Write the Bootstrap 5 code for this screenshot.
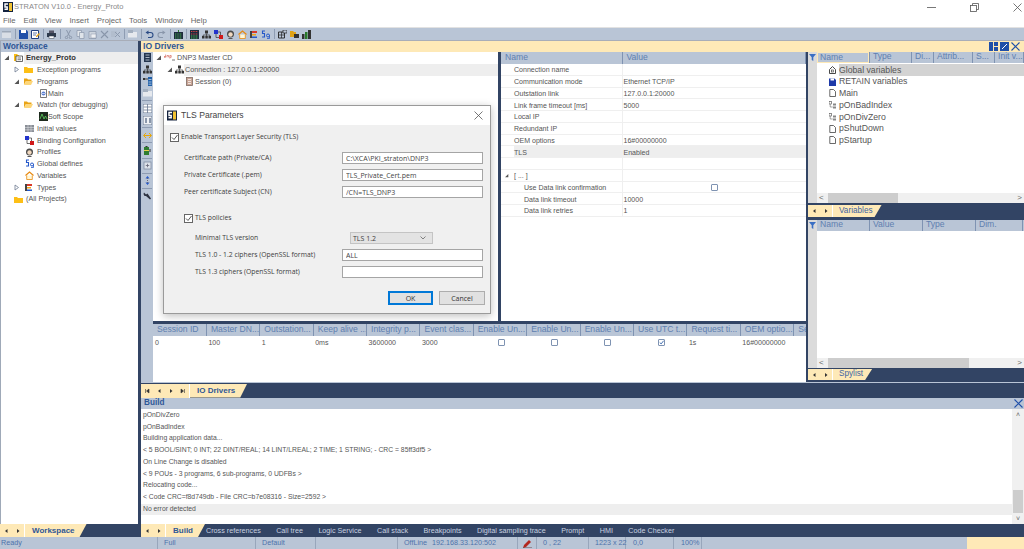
<!DOCTYPE html>
<html lang="en">
<head>
<meta charset="utf-8">
<title>STRATON V10.0 - Energy_Proto</title>
<link rel="stylesheet" href="https://cdn.jsdelivr.net/npm/bootstrap@5.3.0/dist/css/bootstrap.min.css">
<style>
html,body{margin:0;width:1024px;height:549px;overflow:hidden;background:#fff}
body{font:7.2px/1 "Liberation Sans",Arial,sans-serif;color:#555;display:flex;flex-direction:column;opacity:.999}
svg{display:block;flex:none}
.sprites{position:absolute;width:0;height:0}
.ttl{height:14px;color:#8a8a8a;font-size:7.5px;padding-left:3px;gap:1px;flex:none}
.logo{width:10px;height:10px}
.winb{margin-left:auto;gap:34px;padding-right:2px}
.winb svg{width:9px;height:9px}
.mnu{height:13px;flex:none;color:#666;font-size:7.8px;padding-left:3px;gap:7.9px;padding-top:1px}
.tbar{height:14px;flex:none;background:#b9c5d6;border-top:1px solid #e2e2e2;border-bottom:1px solid #a8adb8;padding-left:2px}
.tbar svg{width:9px;height:9px;margin-right:2.8px}
.tsep{width:1px;height:10px;background:#8e9cb2;margin:0 3px 0 1px;flex:none}
.main{flex:1 1 auto;min-height:0;background:#324464}
.leftc{width:138px;flex:none;background:#fff;border-left:1px solid #9fa9b8}
.phead{height:11px;background:#b9c5d6;color:#2f5796;font-weight:700;font-size:8.4px;padding-left:2px;flex:none}
.tr{height:11.78px;flex:none;white-space:nowrap;font-size:7.2px}
.tr svg{width:9px;height:9px}
.tr .arr{width:7px;height:7px}
.l0{padding-left:2px}.l1{padding-left:12px}.l2{padding-left:38px}.l1n{padding-left:24px}.l3{padding-left:13px}
.arrs{gap:4px}
.ico{margin-right:3px}
.ename{background:#eee;font-weight:700;font-size:7.6px;color:#333;padding-left:2px;margin-left:-3px;flex:1;height:100%;display:flex;align-items:center}
.midc{width:883px;margin-left:3px;flex:none;background:#fff}
.iohd{height:11px;background:#fee9b7;border-top:1px solid #a8adb8;margin-top:-1px;flex:none;color:#2f5796;font-weight:700;font-size:8.6px;padding-left:2px;box-sizing:content-box}
.iobtn{margin-left:auto;gap:2px;padding-right:4px}
.iobtn svg{width:9px;height:9px}
.upper{height:329.5px;flex:none;background:#324464}
.strip{width:12px;flex:none;background:#b9c5d6}
.strip svg{width:9px;height:9px;margin:1.4px auto}
.stsep{height:1px;background:#8e9cb2;margin:1.2px 1px;flex:none}
.centerc{width:653px;flex:none;background:#324464;margin-right:2px}
.toprow{height:269px;flex:none}
.iotree{width:345px;flex:none;background:#fff}
.t1{padding-left:2px}.t2{padding-left:13px}.t3{padding-left:32px}
.trg{gap:2px}
.tr .dnp{width:11px}
.m1{margin-right:1px}
.sel2{background:#eee;flex:1;padding-left:1px;margin-left:-2px;height:100%;display:flex;align-items:center}
.props{width:305px;margin-left:3px;flex:none;background:#fff;overflow:hidden}
.gridt{table-layout:fixed;margin:0;--bs-table-bg:transparent;--bs-table-color:#555;color:#555;font-size:7.05px;border-collapse:collapse}
.gridt>:not(caption)>*>*{padding:1px 0 0 2px;height:11.75px;line-height:9px;border-bottom:0;white-space:nowrap;overflow:hidden;font-weight:400;box-shadow:none;vertical-align:middle}
.gridt>thead>tr>th{background:#b9c5d6;color:#5f80b0;font-size:8.6px;border-right:1px solid #7f93b2;height:11.5px;padding:0 0 0 4px}
.props .gridt td{border-bottom:1px solid #efefef}
.props .gridt td:first-child{border-right:1px solid #efefef;padding-left:13px}
.props .gridt .kid td:first-child{padding-left:23px}
.props .gridt .expr td:first-child{padding-left:3px}
.props .gridt .hit td{background:#eee}
.props .gridt .hit td:first-child{background:linear-gradient(90deg,#fff 13px,#eee 13px)}
.props .gridt td:last-child{padding-left:1px}
.expin{gap:5px}
.expin svg{width:5px;height:5px}
.cname{width:121px}
.chk{width:7px;height:7px;border:1px solid #7f93b2;background:#fff;margin:auto;border-radius:1px}
.chk svg{width:5px;height:5px}
.sess{background:#fff;margin-top:3px;flex:1;min-height:0;overflow:hidden}
.sess .gridt{width:680px}
.sess .gridt>*>*>*{width:53.4px}
.sess .gridt>tbody>tr>td{height:13px;padding-top:1px}
.rightc{width:216px;flex:none}
.vpane{flex:none;background:#dbdbdb;overflow:hidden}
.vtop{height:151px}
.vspy{height:148px}
.vbody{background:#fff;padding-top:1px}
.vhead{height:11px;background:#b9c5d6;flex:none}
.filt{width:9px;height:11px;flex:none;background:#dbdbdb}
.filt svg{width:7px;height:7px;margin:2px auto}
.vtb{height:11.75px;white-space:nowrap;font-size:8.7px;padding-left:12px}
.vtb svg{width:7px;height:8px;margin-right:3px}
.vsel{background:#d3d3d3;flex:1;height:100%;display:flex;align-items:center}
.hcell{color:#5f80b0;font-size:8.6px;height:11px;padding-left:3px;border-right:1px solid #7f93b2;white-space:nowrap;overflow:hidden;flex:none}
.hon{box-shadow:inset 0 0 0 1px #fee9b7;line-height:11px}
.w53{width:53px}.w42{width:42px}.w22{width:22px}.w39{width:39px}.w29{width:29px}.w47{width:47px}
.sb{height:10px;background:#f0f0f0;flex:none;color:#666;font-size:8px;margin-top:auto;padding:0 2px;margin-left:9px}
.sbl{width:9px;flex:none}
.thumb{width:70px;height:10px;background:#cdcdcd}
.thumb2{width:141px}
.rtab{flex:none;background:#324464}
.rt1{height:17px;padding-top:2px}
.rt1 .navb,.rt1 .ntab{height:12px}
.rt2{flex:1;padding-top:1px}
.rt2 .navb,.rt2 .ntab{height:11px}
.tabs{flex:none;background:#324464;color:#c8d2e0;white-space:nowrap}
.h16{height:16px;padding-top:1px;border-top:1px solid #b9c5d6}
.h13{height:13px}
.navb{background:#fee9b7;height:100%;padding:0 3px;gap:6px;flex:none;border-right:1px solid #fff}
.navb svg{width:6px;height:6px}
.ntab{background:#fee9b7;color:#2f5796;font-weight:700;font-size:8px;height:100%;padding:0 12px 0 7px;clip-path:polygon(0 0,100% 0,calc(100% - 7px) 100%,0 100%);flex:none}
.ntabr{font-weight:400;color:#3e64a2;font-size:8.2px;padding:0 9px 0 6px}
.bhead{height:11.5px;background:#b9c5d6;flex:none;color:#2f5796;font-weight:700;font-size:8.2px;padding:0 1px 0 3px}
.bhead svg{width:9px;height:9px;margin-left:auto}
.bbody{flex:1 1 auto;min-height:0;background:#fff}
.blines{flex:1;padding-top:.5px}
.bl{height:11.75px;padding-left:2px;white-space:nowrap;font-size:6.8px}
.bon{background:#eee}
.bsb{width:12px;flex:none;background:#f0f0f0;color:#666;font-size:7px;padding:2px 0}
.bth{width:10px;height:23px;background:#cdcdcd;margin:auto auto 2px}
.bct{font-size:7.2px;color:#c8d2e0;flex:none}
.bleft{width:141px;height:100%;flex:none}
.bright{height:100%;gap:15.45px}
.bright>.navb{margin-right:-15.45px}
.bright>.ntab{margin-right:-14.45px}
.stbar{height:12px;flex:none;background:#b9c5d6;color:#4d72ab;font-size:7.2px;white-space:nowrap}
.sc{height:100%;padding-left:6px;border-right:1px solid #98a6bb;flex:none}
.sc1{width:158px;padding-left:1px}.sc2{width:98px}.sc3{width:60px}.sc4{width:82px}.sc5{width:120px;gap:5px}.sc6{width:19px;padding-left:5px}.sc7{width:52px}.sc8{width:37px}.sc9{width:48px;padding-left:7px}.sc10{width:28px;padding-left:7px}
.pen{width:9px;height:9px}
.peach{background:#fee9b7;margin-left:auto;width:57px;height:100%}
.dlg{position:absolute;left:163px;top:105px;width:328px;height:209px;background:#f0f0f0;border:1px solid #9a9a9a;box-shadow:0 2px 8px rgba(0,0,0,.25);font-family:"Open Sans","Liberation Sans",sans-serif;font-size:6.8px;color:#3c3c3c;z-index:5}
.dhd{height:19px;background:#fff;padding:0 7px 0 3px;font-size:8.6px;color:#444;font-family:"Liberation Sans",sans-serif}
.dhd .logo{width:10px;height:11px;margin-right:4px}
.dhd .cls{margin-left:auto;width:9px;height:9px}
.dbd{padding:8px 7px 0 6px}
.dck{gap:2px}
.mk{width:9px;height:9px;border:1px solid #666;background:#fff;flex:none}
.mk svg{width:7px;height:7px}
.frow,.frw2{height:12px;margin-bottom:5px}
.dlg .form-control{margin-left:auto;width:141px;height:12px;min-height:0;padding:0 3px;font:inherit;font-size:7px;line-height:10px;border:1px solid #a5a5a5;border-radius:0;color:#444;flex:none;background:#fff}
.flab{padding-left:14px}
.flab2{padding-left:25px}
.dsel{width:83px;height:12px;background:#e3e3e3;border:1px solid #c4c4c4;margin-left:auto;margin-right:50px;padding:0 6px 0 2px;flex:none;font-size:7px}
.dsel svg{width:6px;height:4px;margin-left:auto}
.dbtn{gap:6px;margin-top:13px;margin-right:-2px;justify-content:flex-end}
.dlg .btn{width:46px;height:14px;padding:0;font:inherit;font-size:7px;line-height:11px;border-radius:0;background:#e1e1e1;border:1px solid #adadad;color:#333}
.dlg .btn-primary{border:2px solid #0078d7;width:45px}
.gapB{margin-top:16px;margin-bottom:9px}
.mt9{margin-bottom:10px}
</style>
</head>
<body>
<svg class="sprites" aria-hidden="true">
<defs>
<symbol id="logo" viewBox="0 0 10 10"><rect width="10" height="10" fill="#14233f"/><rect x="6" y="1" width="3" height="8" fill="#f1c232"/><path d="M5 2H2v3h2.200v2.200H1.500" fill="none" stroke="#fff" stroke-width="1.400"/></symbol>
<symbol id="fold" viewBox="0 0 9 9"><path d="M0 2h3l1 1h5v5H0z" fill="#fdbf16"/></symbol>
<symbol id="fopen" viewBox="0 0 9 9"><path d="M0 1.500h3l1 1h3.500V4H2L0 8z" fill="#e9a416"/><path d="M2 4h7L7 8H0z" fill="#fdd67a"/></symbol>
<symbol id="proj" viewBox="0 0 9 9"><path d="M0 1h3l1 1h1v6H0z" fill="#fdbf16"/><path d="M2 3h6.500v5.500H2z" fill="#fff" stroke="#444" stroke-width=".8"/><path d="M3.500 5h3.500M3.500 6.700h3.500" stroke="#444" stroke-width=".7"/></symbol>
<symbol id="main" viewBox="0 0 9 9"><path d="M1.500.5h6v8h-6z" fill="#fff" stroke="#555" stroke-width=".8"/><circle cx="4.500" cy="4.500" r="2" fill="#5b7fd1"/><path d="M3 4.500h3" stroke="#fff" stroke-width=".6"/></symbol>
<symbol id="scope" viewBox="0 0 9 9"><rect width="9" height="9" fill="#1d2a1d"/><path d="M1 7l2-5 2 5 1.500-3L8 7" fill="none" stroke="#5fd35f" stroke-width=".8"/></symbol>
<symbol id="init" viewBox="0 0 9 9"><rect y="1" width="9" height="7" fill="#8a8f96"/><path d="M0 3.500h9M0 5.800h9M3 1v7M6 1v7" stroke="#e4e6ea" stroke-width=".5"/></symbol>
<symbol id="bind" viewBox="0 0 9 9"><rect width="4" height="4" fill="#2233cc"/><rect x="5" y="5" width="4" height="4" fill="#d11a1a"/><path d="M4 2h2.500v3M2 4v3.500h3" fill="none" stroke="#333" stroke-width=".7"/></symbol>
<symbol id="prof" viewBox="0 0 9 9"><circle cx="4.500" cy="4" r="3.500" fill="#4b4b4b"/><circle cx="4.500" cy="4.500" r="2.200" fill="#f1d9c0"/><path d="M2.500 8.500h4" stroke="#555"/></symbol>
<symbol id="glob" viewBox="0 0 9 9"><path d="M4 1H1.500v2.500H3.500V7H1" fill="none" stroke="#2458c9" stroke-width="1.100"/><circle cx="7" cy="5.500" r="1.500" fill="none" stroke="#2458c9"/><path d="M8.500 5v3.500H6" fill="none" stroke="#2458c9" stroke-width=".8"/></symbol>
<symbol id="home" viewBox="0 0 9 9"><path d="M.5 4.500L4.500 1l4 3.500" fill="none" stroke="#e88a12" stroke-width="1.200"/><path d="M1.700 4.500v4h5.600v-4" fill="#fff7d6" stroke="#e88a12" stroke-width=".8"/></symbol>
<symbol id="types" viewBox="0 0 9 9"><rect x="1" y="1" width="2" height="7" fill="#444"/><rect x="3" y="1" width="5" height="2" fill="#d93a2b"/><rect x="3" y="4" width="4" height="1.500" fill="#f0a41a"/><rect x="3" y="6.500" width="5" height="1.500" fill="#2458c9"/></symbol>
<symbol id="net" viewBox="0 0 9 9"><rect x="3" y=".5" width="3" height="3" fill="#333"/><rect y="6" width="2.500" height="2.500" fill="#333"/><rect x="3.300" y="6" width="2.500" height="2.500" fill="#333"/><rect x="6.500" y="6" width="2.500" height="2.500" fill="#333"/><path d="M1.200 6V5h6.600v1M4.500 3.500V6" fill="none" stroke="#333" stroke-width=".7"/></symbol>
<symbol id="sess" viewBox="0 0 9 9"><rect x="1.500" y=".5" width="6" height="8" fill="#c9a596" stroke="#7e6a62" stroke-width=".8"/><path d="M3 2.500h3M3 4.500h3M3 6.500h3" stroke="#fff" stroke-width=".7"/></symbol>
<symbol id="arrd" viewBox="0 0 7 7"><path d="M6 1.500V6H1.500z" fill="#555"/></symbol>
<symbol id="arrr" viewBox="0 0 7 7"><path d="M2 1l3.500 2.500L2 6z" fill="#fff" stroke="#6e7c92" stroke-width=".8"/></symbol>
<symbol id="save" viewBox="0 0 9 9"><path d="M0 0h7.500L9 1.500V9H0z" fill="#1f4fa8"/><rect x="2" y="0" width="5" height="3" fill="#fff"/></symbol>
<symbol id="savas" viewBox="0 0 9 9"><path d="M.5.500h7v8h-7z" fill="#fff" stroke="#1f3f80"/><path d="M2 3h4M2 5h3" stroke="#1f3f80" stroke-width=".7"/><path d="M5 6l3-3 1 1-3 3H5z" fill="#e5a51a"/></symbol>
<symbol id="print" viewBox="0 0 9 9"><rect y="3" width="9" height="4" fill="#2f3b4d"/><rect x="2" y=".5" width="5" height="2.500" fill="#556"/><rect x="2" y="6" width="5" height="2.500" fill="#fff" stroke="#2f3b4d" stroke-width=".5"/></symbol>
<symbol id="gnew" viewBox="0 0 9 9"><rect y="1" width="9" height="7" fill="#d9dee6"/><rect y="1" width="9" height="1.500" fill="#9da8b8"/></symbol>
<symbol id="gcut" viewBox="0 0 9 9"><path d="M2.500 0l3 6M6.500 0l-3 6" stroke="#8996aa" fill="none"/><circle cx="2.500" cy="7.500" r="1.200" fill="none" stroke="#8996aa"/><circle cx="6.500" cy="7.500" r="1.200" fill="none" stroke="#8996aa"/></symbol>
<symbol id="gcop" viewBox="0 0 9 9"><path d="M1 .5h4.500v6H1z" fill="#dfe4ea" stroke="#8996aa" stroke-width=".7"/><path d="M3.500 2.500H8v6H3.500z" fill="#dfe4ea" stroke="#8996aa" stroke-width=".7"/></symbol>
<symbol id="gpas" viewBox="0 0 9 9"><path d="M1 1.500h7v7H1z" fill="#cfd6df" stroke="#8996aa" stroke-width=".7"/><path d="M3 4h5v4H3z" fill="#eef0f3" stroke="#8996aa" stroke-width=".5"/></symbol>
<symbol id="gx" viewBox="0 0 9 9"><path d="M1 1l7 7M8 1L1 8" stroke="#8996aa" stroke-width="1.100"/></symbol>
<symbol id="gxb" viewBox="0 0 9 9"><path d="M0 2h6M0 4h5M0 6h4" stroke="#a7b2c2" stroke-width=".8"/><path d="M4 2l5 5M9 2L4 7" stroke="#8996aa" stroke-width=".9"/></symbol>
<symbol id="gdoc" viewBox="0 0 9 9"><rect y="2" width="9" height="5.500" fill="#e6e9ee"/><rect x="0" y="0" width="5" height="3" fill="#a3afbf"/></symbol>
<symbol id="undo" viewBox="0 0 9 9"><path d="M2 2.500h3.500a2.300 2.300 0 0 1 0 5H3" fill="none" stroke="#2a4b85" stroke-width="1.100"/><path d="M3.500 .5L.5 2.500l3 2z" fill="#2a4b85"/></symbol>
<symbol id="redo" viewBox="0 0 9 9"><path d="M7 2.500H3.500a2.300 2.300 0 0 0 0 5H6" fill="none" stroke="#8996aa" stroke-width="1.100"/><path d="M5.500 .5l3 2-3 2z" fill="#8996aa"/></symbol>
<symbol id="grn" viewBox="0 0 9 9"><rect y="2" width="9" height="7" fill="#1d2a3d"/><path d="M1 4h7M1 6h7M1 8h7" stroke="#4dc04d" stroke-dasharray="1 .7" stroke-width=".9"/><path d="M4 0h1v2H4z" fill="#2a7a2a"/></symbol>
<symbol id="grd" viewBox="0 0 9 9"><rect width="9" height="9" fill="#1d2a3d"/><path d="M1 1.500h7M1 4h7" stroke="#d94040" stroke-dasharray="1 .7" stroke-width="1"/><path d="M1 6h7M1 8h7" stroke="#4dc04d" stroke-dasharray="1 .7" stroke-width="1"/></symbol>
<symbol id="win" viewBox="0 0 9 9"><path d="M.5 2h6v6h-6z" fill="none" stroke="#222" stroke-width=".9"/><path d="M3.500 2v6M.5 5h6" stroke="#222" stroke-width=".7"/><rect x="5" y="0" width="4" height="3" fill="#b9c5d6" stroke="#222" stroke-width=".7"/></symbol>
<symbol id="tfold" viewBox="0 0 9 9"><path d="M0 1h3l1 1h2v5H0z" fill="#e0a215"/><rect x="4" y="4" width="5" height="4" fill="#333"/></symbol>
<symbol id="tcol" viewBox="0 0 9 9"><rect x="0" y="4" width="2.500" height="5" fill="#333"/><rect x="3" y="2" width="2.500" height="7" fill="#2a7a2a"/><rect x="6" y="0" width="3" height="9" fill="#333"/></symbol>
<symbol id="ss1" viewBox="0 0 9 9"><rect width="9" height="9" fill="#fff" stroke="#6b7a93"/><path d="M.5 3h8M.5 6h8M4.500 0v9" stroke="#6b7a93" stroke-width=".8"/></symbol>
<symbol id="ss2" viewBox="0 0 9 9"><rect width="9" height="9" fill="#eef1f5" stroke="#6b7a93"/><path d="M2 2h2v5H2zM6 2h2v5H6z" fill="#8a97ab"/></symbol>
<symbol id="ssb" viewBox="0 0 9 9"><rect x="1" width="7" height="9" fill="#24364f"/><path d="M2.500 2h4M2.500 4.500h4M2.500 7h4" stroke="#cdd6e2" stroke-width=".8"/></symbol>
<symbol id="stc" viewBox="0 0 9 9"><rect x="5" y="0" width="4" height="9" fill="#1f5fa8"/><path d="M5.500 2.500h3M5.500 5h3M5.500 7.200h3" stroke="#fff" stroke-width=".6"/><path d="M0 2h5" stroke="#333" stroke-width=".9"/><rect y="1" width="2" height="2" fill="#333"/></symbol>
<symbol id="sy" viewBox="0 0 9 9"><path d="M1 4.500h7" stroke="#e6a70a" stroke-width="1"/><path d="M3 2L.5 4.500 3 7M6 2l2.500 2.500L6 7" fill="none" stroke="#e6a70a" stroke-width="1"/></symbol>
<symbol id="sbat" viewBox="0 0 9 9"><rect x="1" y="1" width="5" height="8" fill="#2f7d31"/><rect x="1" y="4" width="5" height="1" fill="#e8d24a"/><rect x="2.500" y="0" width="2" height="1" fill="#333"/><path d="M7 3v3" stroke="#333"/></symbol>
<symbol id="splus" viewBox="0 0 9 9"><rect x="1" y="1" width="7" height="7" fill="#dce2ea" stroke="#7f8da3" stroke-width=".8"/><path d="M2.800 4.500h3.400M4.500 2.800v3.400" stroke="#667" stroke-width=".8"/></symbol>
<symbol id="sup" viewBox="0 0 9 9"><path d="M4.500 0l2 2.500h-4zM4.500 9l2-2.500h-4z" fill="#2458c9"/><path d="M4.500 2v5" stroke="#667" stroke-dasharray="1 1"/></symbol>
<symbol id="wrench" viewBox="0 0 9 9"><path d="M1 1.500L3 3.500l1.500-1L8 7.500 7 8.500 3 5 1.500 5 .5 3z" fill="#2c3240"/></symbol>
<symbol id="filt" viewBox="0 0 7 7"><path d="M0 0h7L4.300 3.200V7L2.700 6V3.200z" fill="#3a6fc4"/></symbol>
<symbol id="vhome" viewBox="0 0 7 8"><path d="M.5 3.500L3.500.5l3 3V7.500h-6z" fill="#fff" stroke="#333" stroke-width=".9"/><rect x="2.500" y="4" width="2" height="2" fill="none" stroke="#333" stroke-width=".6"/></symbol>
<symbol id="vsave" viewBox="0 0 7 8"><path d="M0 .5h5.500L7 2v6H0z" fill="#1e3aa8"/><rect x="1.500" y=".5" width="3.500" height="2" fill="#fff"/></symbol>
<symbol id="vdoc" viewBox="0 0 7 8"><path d="M.8.500h3.700l2 2v5H.800z" fill="#fff" stroke="#444" stroke-width=".8"/></symbol>
<symbol id="vsub" viewBox="0 0 7 8"><rect x="0" y=".5" width="2.500" height="2.500" fill="#fff" stroke="#444" stroke-width=".6"/><path d="M1.200 3v3h2.500" fill="none" stroke="#666" stroke-width=".6"/><rect x="4" y="2.500" width="3" height="2" fill="#888"/><rect x="4" y="5.500" width="3" height="2" fill="#888"/></symbol>
<symbol id="tl1" viewBox="0 0 9 9"><rect width="4" height="9" fill="#1f4fa8"/><rect x="5" width="4" height="4" fill="#1f4fa8"/><rect x="5" y="5" width="4" height="4" fill="#1f4fa8"/></symbol>
<symbol id="tl2" viewBox="0 0 9 9"><rect width="9" height="9" fill="#1f4fa8"/><path d="M2 7L7 2" stroke="#fff" stroke-width="1"/></symbol>
<symbol id="tx" viewBox="0 0 9 9"><path d="M.5.500l8 8M8.500.500l-8 8" stroke="#1f4fa8" stroke-width="1.100"/></symbol>
<symbol id="nl" viewBox="0 0 6 6"><path d="M4.500 1v4L2 3z" fill="#333"/></symbol>
<symbol id="nr" viewBox="0 0 6 6"><path d="M2 1v4l2.500-2z" fill="#333"/></symbol>
<symbol id="nf" viewBox="0 0 6 6"><path d="M5 1v4L2.500 3zM1.500 1v4" fill="#333" stroke="#333" stroke-width=".6"/></symbol>
<symbol id="ne" viewBox="0 0 6 6"><path d="M1 1v4l2.500-2zM4.500 1v4" fill="#333" stroke="#333" stroke-width=".6"/></symbol>
<symbol id="cmk" viewBox="0 0 7 7"><path d="M1 3.500l2 2L6.500 1" fill="none" stroke="#444" stroke-width=".9"/></symbol>
<symbol id="cmkb" viewBox="0 0 7 7"><path d="M1 3.500l2 2L6.500 1" fill="none" stroke="#2b5fa8" stroke-width="1.200"/></symbol>
<symbol id="pen" viewBox="0 0 9 9"><path d="M0 9l1-3 5-5 2 2-5 5z" fill="#b3271f"/><path d="M0 9h9" stroke="#5a2a2a" stroke-width=".8"/></symbol>
<symbol id="chev" viewBox="0 0 6 4"><path d="M.5.500l2.500 2.500L5.500.500" fill="none" stroke="#666" stroke-width=".8"/></symbol>
<symbol id="wmin" viewBox="0 0 9 9"><path d="M0 4.500h9" stroke="#555" stroke-width=".8"/></symbol>
<symbol id="wmax" viewBox="0 0 9 9"><path d="M2.500 2.500V.5h6v6h-2" fill="none" stroke="#555" stroke-width=".8"/><rect x=".5" y="2.500" width="6" height="6" fill="none" stroke="#555" stroke-width=".8"/></symbol>
<symbol id="wx" viewBox="0 0 9 9"><path d="M.5.500l8 8M8.500.500l-8 8" stroke="#555" stroke-width=".8"/></symbol>
<symbol id="dn" viewBox="0 0 11 9"><path d="M0 3.500h1.600v-2M1.600 3.500v.8H0v-.8M3 4.300V2.500h1.500v1.800M5.800 5.500V2.500h1.400v1.800H5.800" fill="none" stroke="#d2574a" stroke-width=".6"/><path d="M8 7h3" stroke="#777"/></symbol>
</defs>
</svg>

<header class="ttl d-flex align-items-center">
<svg class="logo"><use href="#logo"/></svg><span>STRATON V10.0 - Energy_Proto</span>
<div class="winb d-flex"><svg><use href="#wmin"/></svg><svg><use href="#wmax"/></svg><svg><use href="#wx"/></svg></div>
</header>
<nav class="mnu d-flex align-items-center"><span>File</span><span>Edit</span><span>View</span><span>Insert</span><span>Project</span><span>Tools</span><span>Window</span><span>Help</span></nav>
<div class="tbar d-flex align-items-center">
<svg><use href="#gnew"/></svg><i class="tsep"></i>
<svg><use href="#save"/></svg><svg><use href="#savas"/></svg><i class="tsep"></i>
<svg><use href="#print"/></svg><i class="tsep"></i>
<svg><use href="#gcut"/></svg><svg><use href="#gcop"/></svg><svg><use href="#gpas"/></svg><svg><use href="#gx"/></svg><svg><use href="#gxb"/></svg><i class="tsep"></i>
<svg><use href="#gdoc"/></svg><i class="tsep"></i>
<svg><use href="#undo"/></svg><svg><use href="#redo"/></svg><i class="tsep"></i>
<svg><use href="#grn"/></svg><i class="tsep"></i>
<svg><use href="#grd"/></svg><svg><use href="#net"/></svg><svg><use href="#bind"/></svg><svg><use href="#prof"/></svg><svg><use href="#home"/></svg><svg><use href="#types"/></svg><svg><use href="#glob"/></svg><i class="tsep"></i>
<svg><use href="#win"/></svg><svg><use href="#tfold"/></svg><svg><use href="#tcol"/></svg>
</div>

<main class="main d-flex">
<aside class="leftc d-flex flex-column">
<div class="phead d-flex align-items-center">Workspace</div>
<div class="flex-grow-1">
<div class="tr d-flex align-items-center l0 arrs"><svg class="arr"><use href="#arrd"/></svg><svg><use href="#proj"/></svg><span class="ename">Energy_Proto</span></div>
<div class="tr d-flex align-items-center l1 arrs"><svg class="arr"><use href="#arrr"/></svg><svg><use href="#fold"/></svg>Exception programs</div>
<div class="tr d-flex align-items-center l1 arrs"><svg class="arr"><use href="#arrd"/></svg><svg><use href="#fopen"/></svg>Programs</div>
<div class="tr d-flex align-items-center l2"><svg><use href="#main"/></svg>Main</div>
<div class="tr d-flex align-items-center l1 arrs"><svg class="arr"><use href="#arrd"/></svg><svg><use href="#fopen"/></svg>Watch (for debugging)</div>
<div class="tr d-flex align-items-center l2"><svg><use href="#scope"/></svg>Soft Scope</div>
<div class="tr d-flex align-items-center l1n"><svg class="ico"><use href="#init"/></svg>Initial values</div>
<div class="tr d-flex align-items-center l1n"><svg class="ico"><use href="#bind"/></svg>Binding Configuration</div>
<div class="tr d-flex align-items-center l1n"><svg class="ico"><use href="#prof"/></svg>Profiles</div>
<div class="tr d-flex align-items-center l1n"><svg class="ico"><use href="#glob"/></svg>Global defines</div>
<div class="tr d-flex align-items-center l1n"><svg class="ico"><use href="#home"/></svg>Variables</div>
<div class="tr d-flex align-items-center l1 arrs"><svg class="arr"><use href="#arrr"/></svg><svg><use href="#types"/></svg>Types</div>
<div class="tr d-flex align-items-center l3"><svg class="ico"><use href="#fold"/></svg>(All Projects)</div>
</div>
</aside>

<section class="midc d-flex flex-column">
<div class="iohd d-flex align-items-center">IO Drivers
<div class="iobtn d-flex"><svg><use href="#tl1"/></svg><svg><use href="#tl2"/></svg><svg><use href="#tx"/></svg></div></div>
<div class="upper d-flex">
<div class="strip d-flex flex-column">
<svg><use href="#ssb"/></svg><svg><use href="#net"/></svg><svg><use href="#stc"/></svg><svg><use href="#gdoc"/></svg><div class="stsep"></div>
<svg><use href="#ss1"/></svg><svg><use href="#ss2"/></svg><div class="stsep"></div>
<svg><use href="#sy"/></svg><div class="stsep"></div>
<svg><use href="#sbat"/></svg><div class="stsep"></div>
<svg><use href="#splus"/></svg><div class="stsep"></div>
<svg><use href="#sup"/></svg><div class="stsep"></div>
<svg><use href="#wrench"/></svg>
</div>
<div class="centerc d-flex flex-column">
<div class="toprow d-flex">
<div class="iotree">
<div class="tr d-flex align-items-center t1 trg"><svg class="arr"><use href="#arrd"/></svg><svg class="dnp"><use href="#dn"/></svg>DNP3 Master CD</div>
<div class="tr d-flex align-items-center t2 trg"><svg class="arr"><use href="#arrd"/></svg><svg><use href="#net"/></svg><span class="sel2">Connection : 127.0.0.1:20000</span></div>
<div class="tr d-flex align-items-center t3"><svg class="m1"><use href="#sess"/></svg>Session (0)</div>
</div>
<div class="props">
<table class="table gridt">
<thead><tr><th class="cname">Name</th><th>Value</th></tr></thead>
<tbody>
<tr><td>Connection name</td><td></td></tr>
<tr><td>Communication mode</td><td>Ethernet TCP/IP</td></tr>
<tr><td>Outstation link</td><td>127.0.0.1:20000</td></tr>
<tr><td>Link frame timeout [ms]</td><td>5000</td></tr>
<tr><td>Local IP</td><td></td></tr>
<tr><td>Redundant IP</td><td></td></tr>
<tr><td>OEM options</td><td>16#00000000</td></tr>
<tr class="hit"><td>TLS</td><td>Enabled</td></tr>
<tr><td></td><td></td></tr>
<tr class="expr"><td><div class="expin d-flex align-items-center"><svg viewBox="0 0 7 7"><use href="#arrd"/></svg><span>[ ... ]</span></div></td><td></td></tr>
<tr class="kid"><td>Use Data link confirmation</td><td><div class="chk"></div></td></tr>
<tr class="kid"><td>Data link timeout</td><td>10000</td></tr>
<tr class="kid"><td>Data link retries</td><td>1</td></tr>
</tbody>
</table>
</div>
</div>
<div class="sess">
<table class="table gridt">
<thead><tr><th>Session ID</th><th>Master DN...</th><th>Outstation...</th><th>Keep alive ...</th><th>Integrity p...</th><th>Event clas...</th><th>Enable Un...</th><th>Enable Un...</th><th>Enable Un...</th><th>Use UTC t...</th><th>Request ti...</th><th>OEM optio...</th><th>Se</th></tr></thead>
<tbody><tr><td>0</td><td>100</td><td>1</td><td>0ms</td><td>3600000</td><td>3000</td><td><div class="chk"></div></td><td><div class="chk"></div></td><td><div class="chk"></div></td><td><div class="chk d-flex"><svg><use href="#cmkb"/></svg></div></td><td>1s</td><td>16#00000000</td><td></td></tr></tbody>
</table>
</div>
</div>
<div class="rightc d-flex flex-column">
<div class="vpane vtop d-flex flex-column">
<div class="vhead d-flex"><div class="filt"><svg><use href="#filt"/></svg></div><div class="hcell hon w53">Name</div><div class="hcell w42">Type</div><div class="hcell w22">Di...</div><div class="hcell w39">Attrib...</div><div class="hcell w22">S...</div><div class="hcell w29">Init v...</div></div>
<div class="d-flex flex-grow-1"><div class="filt h-100"></div><div class="flex-grow-1 vbody">
<div class="vtb d-flex align-items-center"><svg><use href="#vhome"/></svg><span class="vsel">Global variables</span></div>
<div class="vtb d-flex align-items-center"><svg><use href="#vsave"/></svg>RETAIN variables</div>
<div class="vtb d-flex align-items-center"><svg><use href="#vdoc"/></svg>Main</div>
<div class="vtb d-flex align-items-center"><svg><use href="#vsub"/></svg>pOnBadIndex</div>
<div class="vtb d-flex align-items-center"><svg><use href="#vsub"/></svg>pOnDivZero</div>
<div class="vtb d-flex align-items-center"><svg><use href="#vdoc"/></svg>pShutDown</div>
<div class="vtb d-flex align-items-center"><svg><use href="#vdoc"/></svg>pStartup</div>
</div></div>
<div class="sb d-flex align-items-center"><span class="sbl">&lt;</span><div class="thumb"></div><span class="ms-auto">&gt;</span></div>
</div>
<div class="rtab rt1 d-flex">
<div class="navb d-flex align-items-center"><svg><use href="#nl"/></svg><svg><use href="#nr"/></svg></div>
<div class="ntab ntabr d-flex align-items-center">Variables</div>
</div>
<div class="vspy vpane d-flex flex-column">
<div class="vhead d-flex"><div class="filt"><svg><use href="#filt"/></svg></div><div class="hcell w53">Name</div><div class="hcell w53">Value</div><div class="hcell w53">Type</div><div class="hcell w47">Dim.</div></div>
<div class="d-flex flex-grow-1"><div class="filt h-100"></div><div class="flex-grow-1 vbody"></div></div>
<div class="sb d-flex align-items-center"><span class="sbl">&lt;</span><div class="thumb thumb2"></div><span class="ms-auto">&gt;</span></div>
</div>
<div class="rtab rt2 d-flex">
<div class="navb d-flex align-items-center"><svg><use href="#nl"/></svg><svg><use href="#nr"/></svg></div>
<div class="ntab ntabr d-flex align-items-center">Spylist</div>
</div>
</div>
</div>
<div class="tabs h16 d-flex">
<div class="navb d-flex align-items-center"><svg><use href="#nf"/></svg><svg><use href="#nl"/></svg><svg><use href="#nr"/></svg><svg><use href="#ne"/></svg></div>
<div class="ntab d-flex align-items-center">IO Drivers</div>
</div>
<div class="bhead d-flex align-items-center">Build<svg><use href="#tx"/></svg></div>
<div class="bbody d-flex">
<div class="blines">
<div class="bl d-flex align-items-center">pOnDivZero</div>
<div class="bl d-flex align-items-center">pOnBadIndex</div>
<div class="bl d-flex align-items-center">Building application data...</div>
<div class="bl d-flex align-items-center">&lt; 5 BOOL/SINT; 0 INT; 22 DINT/REAL; 14 LINT/LREAL; 2 TIME; 1 STRING; - CRC = 85ff3df5 &gt;</div>
<div class="bl d-flex align-items-center">On Line Change is disabled</div>
<div class="bl d-flex align-items-center">&lt; 9 POUs - 3 programs, 6 sub-programs, 0 UDFBs &gt;</div>
<div class="bl d-flex align-items-center">Relocating code...</div>
<div class="bl d-flex align-items-center">&lt; Code CRC=f8d749db - File CRC=b7e08316 - Size=2592 &gt;</div>
<div class="bl bon d-flex align-items-center">No error detected</div>
</div>
<div class="bsb d-flex flex-column align-items-center"><span>&#708;</span><div class="bth"></div><span>&#709;</span></div>
</div>
</section>
</main>

<div class="tabs h13 d-flex align-items-center bct">
<div class="bleft d-flex">
<div class="navb d-flex align-items-center"><svg><use href="#nl"/></svg><svg><use href="#nr"/></svg></div>
<div class="ntab d-flex align-items-center">Workspace</div>
</div>
<div class="bright d-flex align-items-center">
<div class="navb d-flex align-items-center"><svg><use href="#nl"/></svg><svg><use href="#nr"/></svg></div>
<div class="ntab d-flex align-items-center">Build</div>
<span>Cross references</span><span>Call tree</span><span>Logic Service</span><span>Call stack</span><span>Breakpoints</span><span>Digital sampling trace</span><span>Prompt</span><span>HMI</span><span>Code Checker</span>
</div>
</div>
<footer class="stbar d-flex align-items-center">
<div class="sc sc1 d-flex align-items-center">Ready</div><div class="sc sc2 d-flex align-items-center">Full</div><div class="sc sc3 d-flex align-items-center">Default</div><div class="sc sc4 d-flex align-items-center"></div><div class="sc sc5 d-flex align-items-center"><span>OffLine</span><span>192.168.33.120:502</span></div><div class="sc sc6 d-flex align-items-center"><svg class="pen"><use href="#pen"/></svg></div><div class="sc sc7 d-flex align-items-center">0 , 22</div><div class="sc sc8 d-flex align-items-center">1223 x 22</div><div class="sc sc9 d-flex align-items-center">0,0</div><div class="sc sc10 d-flex align-items-center">100%</div>
<div class="peach"></div>
</footer>

<div class="dlg" role="dialog" aria-label="TLS Parameters">
<div class="dhd d-flex align-items-center"><svg class="logo"><use href="#logo"/></svg>TLS Parameters<svg class="cls"><use href="#wx"/></svg></div>
<div class="dbd">
<div class="dck d-flex align-items-center mt9"><span class="mk d-flex"><svg><use href="#cmk"/></svg></span>Enable Transport Layer Security (TLS)</div>
<div class="frow d-flex align-items-center flab"><span>Certificate path (Private/CA)</span><input class="form-control" value="C:\XCA\PKI_straton\DNP3"></div>
<div class="frow d-flex align-items-center flab"><span>Private Certificate (.pem)</span><input class="form-control" value="TLS_Private_Cert.pem"></div>
<div class="frow d-flex align-items-center flab"><span>Peer certificate Subject (CN)</span><input class="form-control" value="/CN=TLS_DNP3"></div>
<div class="dck d-flex align-items-center flab gapB"><span class="mk d-flex"><svg><use href="#cmk"/></svg></span>TLS policies</div>
<div class="frw2 d-flex align-items-center flab2"><span>Minimal TLS version</span><div class="dsel d-flex align-items-center">TLS 1.2<svg><use href="#chev"/></svg></div></div>
<div class="frw2 d-flex align-items-center flab2"><span>TLS 1.0 - 1.2 ciphers (OpenSSL format)</span><input class="form-control" value="ALL"></div>
<div class="frw2 d-flex align-items-center flab2"><span>TLS 1.3 ciphers (OpenSSL format)</span><input class="form-control" value=""></div>
<div class="dbtn d-flex"><button class="btn btn-primary" type="button">OK</button><button class="btn" type="button">Cancel</button></div>
</div>
</div>
</body>
</html>
